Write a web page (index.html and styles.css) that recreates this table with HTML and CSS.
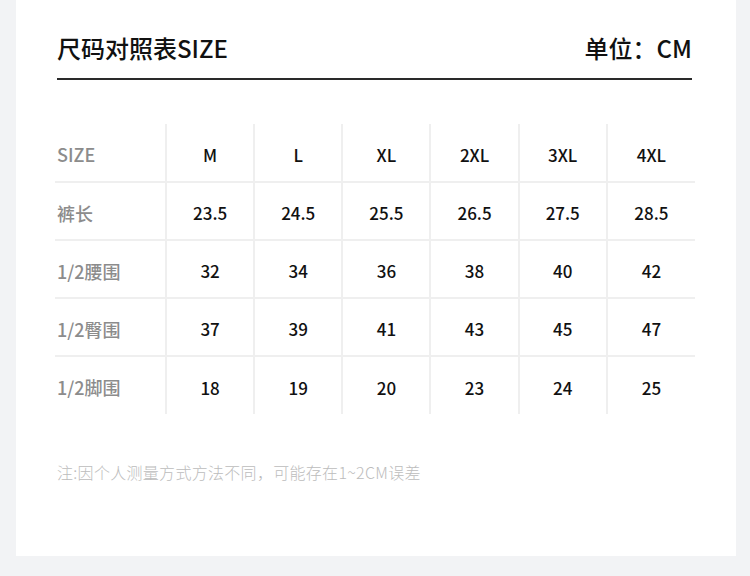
FILE: index.html
```html
<!DOCTYPE html>
<html lang="zh">
<head>
<meta charset="utf-8">
<link rel="stylesheet" href="styles.css">
</head>
<body>
<div class="card">
  <div class="header">
    <div class="title">尺码对照表SIZE</div>
    <div class="unit">单位：CM</div>
  </div>
  <table class="size-table">
    <tr><th>SIZE</th><td>M</td><td>L</td><td>XL</td><td>2XL</td><td>3XL</td><td>4XL</td></tr>
    <tr><th>裤长</th><td>23.5</td><td>24.5</td><td>25.5</td><td>26.5</td><td>27.5</td><td>28.5</td></tr>
    <tr><th>1/2腰围</th><td>32</td><td>34</td><td>36</td><td>38</td><td>40</td><td>42</td></tr>
    <tr><th>1/2臀围</th><td>37</td><td>39</td><td>41</td><td>43</td><td>45</td><td>47</td></tr>
    <tr><th>1/2脚围</th><td>18</td><td>19</td><td>20</td><td>23</td><td>24</td><td>25</td></tr>
  </table>
  <div class="note">注:因个人测量方式方法不同，可能存在1~2CM误差</div>
</div>
</body>
</html>
```
FILE: styles.css
```css
html, body {
  margin: 0;
  padding: 0;
  background: #f2f3f5;
}
body {
  width: 750px;
  height: 576px;
  padding-left: 16px;
  box-sizing: border-box;
  font-family: "Noto Sans CJK SC", "Noto Sans", sans-serif;
}
.card {
  width: 720px;
  height: 556px;
  background: #fff;
  padding: 0 44px 0 41px;
  box-sizing: border-box;
}
.header {
  display: flex;
  justify-content: space-between;
  align-items: center;
  padding-top: 30px;
  padding-bottom: 12px;
  border-bottom: 2px solid #2a2a2a;
  line-height: 36px;
  font-size: 24px;
  font-weight: 500;
  color: #111;
}
.size-table {
  margin: 44px 0 0 -2px;
  width: 640px;
  border-collapse: collapse;
  table-layout: fixed;
}
.size-table tr {
  height: 58px;
}
.size-table th,
.size-table td {
  padding: 3px 0 0 0;
  border: 2px solid #efefef;
  font-weight: 500;
}
.size-table tr:first-child th,
.size-table tr:first-child td { border-top: none; }
.size-table tr:last-child th,
.size-table tr:last-child td { border-bottom: none; }
.size-table th { border-left: none; }
.size-table td:last-child { border-right: none; }
.size-table th {
  width: 108px;
  text-align: left;
  padding-left: 2px;
  font-size: 18px;
  color: #8c8c8c;
}
.size-table td {
  text-align: center;
  font-size: 17px;
  color: #111;
}
.note {
  margin-top: 46px;
  line-height: 24px;
  font-size: 16px;
  letter-spacing: 0.3px;
  color: #bcbcbc;
  font-weight: 300;
}
```
